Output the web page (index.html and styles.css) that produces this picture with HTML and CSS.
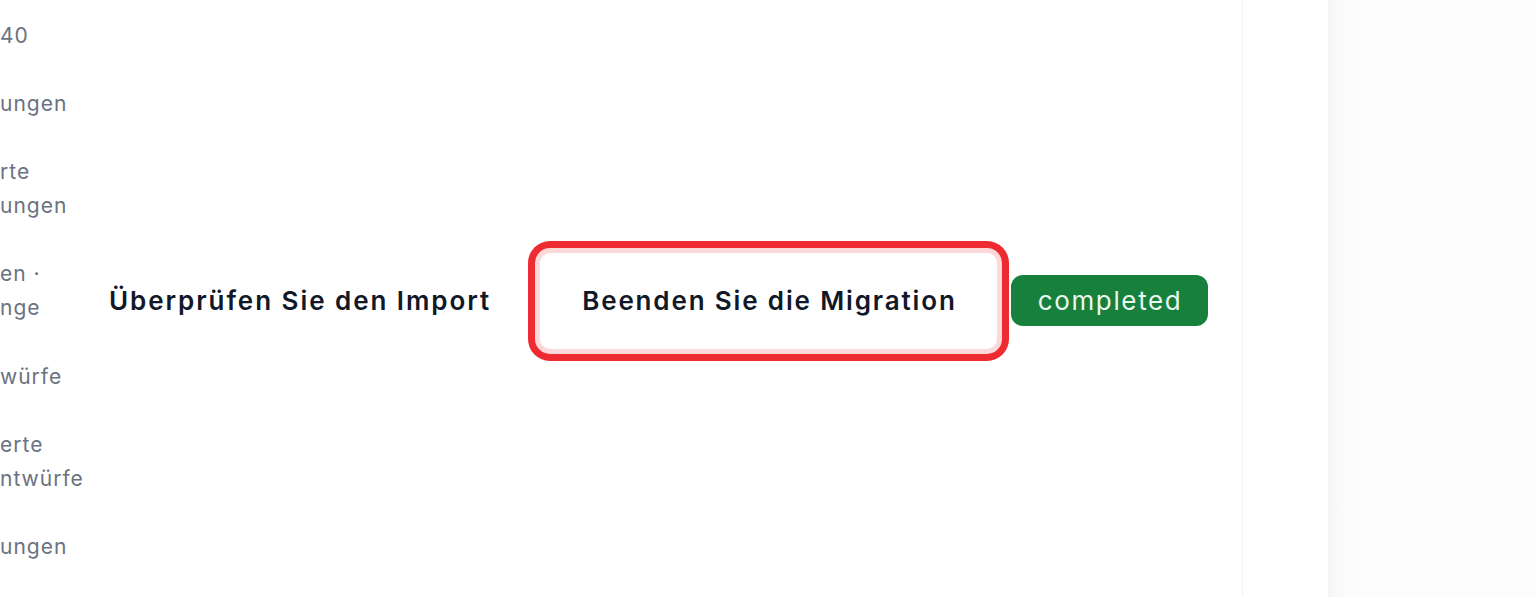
FILE: index.html
```html
<!DOCTYPE html>
<html lang="de">
<head>
<meta charset="utf-8">
<title>Migration</title>
<link rel="stylesheet" href="styles.css">
</head>
<body>
<div class="page">
  <nav class="sidebar">
    <div class="nav-item">40</div>
    <div class="nav-item">ungen</div>
    <div class="nav-item">rte<br>ungen</div>
    <div class="nav-item">en ·<br>nge</div>
    <div class="nav-item">würfe</div>
    <div class="nav-item">erte<br>ntwürfe</div>
    <div class="nav-item">ungen</div>
  </nav>
  <main class="main">
    <div class="steps">
      <span class="step">Überprüfen Sie den Import</span>
      <button class="step-btn">Beenden Sie die Migration</button>
      <span class="badge">completed</span>
    </div>
  </main>
  <div class="gutter"></div>
  <aside class="panel"></aside>
</div>
</body>
</html>
```

FILE: styles.css
```css
html, body {
  margin: 0;
  padding: 0;
  background: #ffffff;
}
body {
  font-family: Inter, "Noto Sans", "Liberation Sans", sans-serif;
  overflow: hidden;
}
.page {
  display: flex;
  height: 597px;
  width: 1536px;
}
.sidebar {
  width: 90px;
  flex: 0 0 90px;
  overflow: hidden;
  padding-top: 18.5px;
  box-sizing: border-box;
  display: flex;
  flex-direction: column;
  gap: 34.3px;
}
.nav-item {
  font-size: 21px;
  line-height: 34px;
  letter-spacing: 1px;
  color: #6b7280;
  white-space: nowrap;
}
.main {
  flex: 1 1 auto;
  border-right: 1px solid #f1f2f4;
  display: flex;
  align-items: center;
  padding-left: 19px;
  padding-top: 4px;
  box-sizing: border-box;
}
.steps {
  display: flex;
  align-items: center;
}
.step {
  font-size: 26px;
  font-weight: 600;
  letter-spacing: 1.95px;
  color: #111827;
  margin-right: 44px;
  line-height: 32px;
}
.step-btn {
  font-family: inherit;
  font-size: 26px;
  font-weight: 600;
  letter-spacing: 1.85px;
  line-height: 32px;
  color: #111827;
  background: #ffffff;
  border: 5px solid #fdd8d8;
  border-radius: 15px;
  padding: 32px 40px 32px 42px;
  box-shadow: 0 0 0 7px #ee2b30;
  margin-right: 9px;
  cursor: pointer;
}
.badge {
  background: #16803c;
  color: #eaf7ee;
  font-size: 26px;
  letter-spacing: 1.65px;
  line-height: 51px;
  height: 51px;
  padding: 0 26px 0 27px;
  border-radius: 12px;
}
.gutter {
  flex: 0 0 85px;
}
.panel {
  flex: 0 0 208px;
  background: linear-gradient(to right, #f5f5f5 0px, #f9f9f9 10px, #fcfcfc 24px, #fdfdfd 40px);
}
```
